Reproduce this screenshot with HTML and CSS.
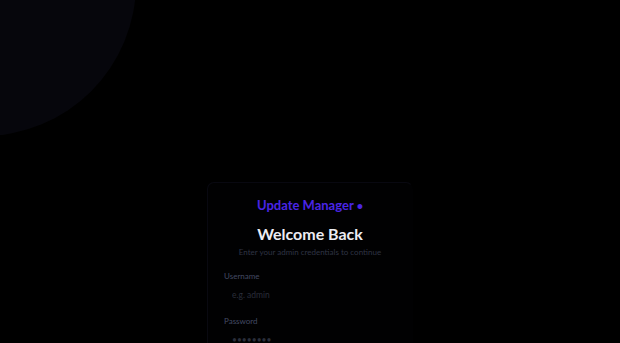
FILE: index.html
```html
<!DOCTYPE html>
<html lang="en">

<head>
  <meta charset="UTF-8">
  <meta name="viewport" content="width=device-width, initial-scale=1.0">
  <title>Update Manager - Login</title>
  <link rel="stylesheet" href="styles.css">
</head>

<body>
  <div class="glow"></div>
  <div class="card">
    <div class="brand">Update Manager <span class="dot">•</span></div>
    <h1 class="title">Welcome Back</h1>
    <p class="sub">Enter your admin credentials to continue</p>
    <form class="form">
      <label class="lbl" for="user">Username</label>
      <input class="field" id="user" type="text" placeholder="e.g. admin">
      <label class="lbl" for="pass">Password</label>
      <input class="field" id="pass" type="password" placeholder="••••••••">
    </form>
  </div>
</body>

</html>
```

FILE: styles.css
```css
body,
h1,
p,
form {
  margin: 0;
  padding: 0;
}

body {
  background: #000;
  height: 100vh;
  overflow: hidden;
  display: flex;
  justify-content: center;
  font-family: Lato, "Liberation Sans", sans-serif;
}

.glow {
  position: absolute;
  left: -170px;
  top: -170px;
  width: 306px;
  height: 306px;
  border-radius: 50%;
  background: radial-gradient(circle, #06060c 0, #06060c 80%, #040409 100%);
}

.card {
  position: relative;
  width: 172px;
  height: 300px;
  margin-top: 182px;
  padding: 14px 16px;
  border: 1px solid transparent;
  border-top-color: rgba(70, 70, 120, 0.12);
  border-left-color: rgba(70, 70, 120, 0.12);
  border-radius: 7px;
  background: #010102;
}

.brand {
  text-align: center;
  color: #4a25e6;
  font-size: 13px;
  font-weight: 700;
  line-height: 16px;
}

.dot {
  font-size: 11px;
}

.title {
  margin-top: 10px;
  text-align: center;
  color: #ececf2;
  font-size: 16px;
  font-weight: 700;
  line-height: 20px;
}

.sub {
  margin: 2px -20px 0;
  text-align: center;
  color: #2f3444;
  font-size: 8px;
  line-height: 12px;
  white-space: nowrap;
}

.form {
  display: flex;
  flex-direction: column;
  margin-top: 13px;
}

.lbl {
  color: #434a62;
  font-size: 8px;
  line-height: 10px;
}

.field {
  margin-top: 4px;
  margin-bottom: 11px;
  height: 20px;
  padding: 0 8px;
  border: none;
  border-radius: 6px;
  background: transparent;
  color: #ccc;
  font-family: inherit;
  font-size: 8.5px;
  outline: none;
}

.field::placeholder {
  color: #2a2e3a;
}
```
